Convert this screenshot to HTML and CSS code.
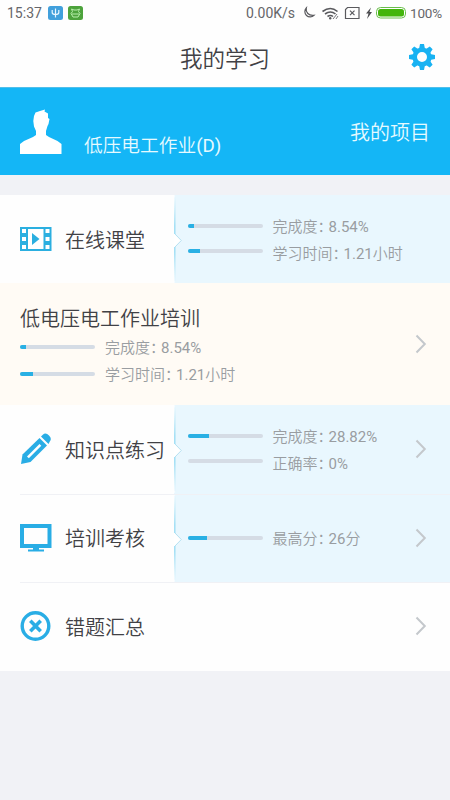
FILE: index.html
```html
<!DOCTYPE html>
<html lang="zh-CN">
<head>
<meta charset="utf-8">
<title>我的学习</title>
<link rel="stylesheet" href="styles.css">
</head>
<body>
<svg class="defs" width="0" height="0">
  <symbol id="chevron" viewBox="0 0 12 20"><path d="M1.500 1.500 9.800 10 1.500 18.500" fill="none" stroke="#c4c8cc" stroke-width="2"/></symbol>
  <symbol id="notch" viewBox="0 0 9 88">
    <linearGradient id="edge" x1="0" y1="0" x2="0" y2="88" gradientUnits="userSpaceOnUse"><stop offset="0" stop-color="#a5e0f5" stop-opacity="0"/><stop offset=".35" stop-color="#a5e0f5"/><stop offset=".65" stop-color="#a5e0f5"/><stop offset="1" stop-color="#a5e0f5" stop-opacity="0"/></linearGradient>
    <path d="M0 0H.5Q1.3 15 1.3 39L7.5 45.500 1.300 52Q1.300 74 .5 88H0Z" fill="#fff"/>
    <path d="M.8 2V39" fill="none" stroke="url(#edge)" stroke-width="1.600"/>
    <path d="M.8 52V86" fill="none" stroke="url(#edge)" stroke-width="1.600"/>
    <path d="M1 39 7.300 45.500 1 52" fill="none" stroke="#b5e1f1" stroke-width="1"/>
  </symbol>
</svg>

<header class="status">
  <span class="time">15:37</span>
  <svg class="app-badges" width="36" height="16" viewBox="0 0 36 16">
    <rect x="0" y="1" width="15" height="14" rx="2.500" fill="#41a0dc"/>
    <path d="M7.500 3.500v9M4.200 5v2.500q0 2 3.300 2t3.300-2V5" fill="none" stroke="#e8f6ff" stroke-width="1.200"/>
    <rect x="20" y="1" width="15" height="14" rx="2.500" fill="#4da33c"/>
    <path d="M24.500 6.500 23.500 4l2.500 1h3l2.500-1-1 2.500 1.500 2-2 3.500h-5l-2-3.500ZM24 9h7" fill="none" stroke="#b9efac" stroke-width="1"/>
  </svg>
  <span class="speed">0.00K/s</span>
  <svg class="signals" width="106" height="16" viewBox="0 0 106 16">
    <path d="M5.300 3A5.100 5.100 0 1 0 13 10.300Q9 10.800 6.800 8.500T5.300 3Z" fill="none" stroke="#5a5a5e" stroke-width="1.200"/>
    <path d="M21.500 6.500q8-6 15 0M24 9q5.500-4 10.500 0M26.500 11.500q3-2 5.500 0" fill="none" stroke="#5a5a5e" stroke-width="1.600"/>
    <circle cx="29.200" cy="13.200" r="1.200" fill="#5a5a5e"/>
    <path d="m32 14 4-5M35 14l2-3" stroke="#77777b"/>
    <path d="M46.500 2.500h11.500v11h-13.500V4.500Z" fill="none" stroke="#5a5a5e" stroke-width="1.200"/>
    <path d="m49 5.700 4.500 4.500M53.500 5.700 49 10.200" stroke="#5a5a5e" stroke-width="1.200"/>
    <path d="m70 2.500-5 6h2.500l-1.500 5.500 5-7h-2.500Z" fill="#4c4c50"/>
    <rect x="75.500" y="2.500" width="29" height="10.500" rx="4" fill="#fff" stroke="#6abe4d"/>
    <rect x="77" y="4" width="26" height="7.500" rx="2.500" fill="#43b50b"/>
  </svg>
  <span class="battery">100%</span>
</header>

<nav class="nav">
  <h1>我的学习</h1>
  <svg class="gear" width="26" height="26" viewBox="-13 -13 26 26" fill="#18b2f2">
    <path d="M-2-13H2L3-8H-3ZM-2 13H2L3 8H-3ZM-13-2V2L-8 3V-3ZM13-2V2L8 3V-3Z"/>
    <path transform="rotate(45)" d="M-2-13H2L3-8H-3ZM-2 13H2L3 8H-3ZM-13-2V2L-8 3V-3ZM13-2V2L8 3V-3Z"/>
    <circle r="7.300" fill="none" stroke="#18b2f2" stroke-width="4.600"/>
  </svg>
</nav>

<section class="profile">
  <svg class="avatar" width="42" height="45" viewBox="0 0 42 45"><path d="M14 7 15.500 3.500 20 2 25 .5 24.500 2.500 28 4.500 28 9 29.500 10 28.500 15 27.500 17 26 22 26 26 29 28 37.500 32 41.500 35V45H0V35L4 32 13 28 16 26V22L14 17.500 13.300 12Z" fill="#fff"/></svg>
  <span class="job">低压电工作业<span class="latin">(D)</span></span>
  <span class="project">我的项目</span>
</section>

<main class="list">
  <div class="row">
    <div class="label">
      <svg width="32" height="26" viewBox="0 0 32 26"><path d="M0 1h31.500v24H0Z" fill="#2bafe0"/><path d="M8 3h15.500v20H8Z" fill="#fff"/><path d="M2 3h4v4H2ZM2 11h4v4H2ZM2 19h4v4H2ZM25.500 3h4v4h-4ZM25.500 11h4v4h-4ZM25.500 19h4v4h-4Z" fill="#fff"/><path d="m12 7 7.500 6-7.500 6Z" fill="#2bafe0"/></svg>
      <span>在线课堂</span>
    </div>
    <div class="panel">
      <svg class="notch"><use href="#notch"/></svg>
      <div class="stats">
        <div class="stat"><i class="bar"><b style="width:8.54%"></b></i><span>完成度<em>：</em><span class="latin">8.54%</span></span></div>
        <div class="stat"><i class="bar"><b style="width:17%"></b></i><span>学习时间<em>：</em><span class="latin">1.21</span>小时</span></div>
      </div>
    </div>
  </div>

  <div class="course">
    <div class="course-body">
      <h2>低电压电工作业培训</h2>
      <div class="stats">
        <div class="stat"><i class="bar"><b style="width:8.54%"></b></i><span>完成度<em>：</em><span class="latin">8.54%</span></span></div>
        <div class="stat"><i class="bar"><b style="width:17%"></b></i><span>学习时间<em>：</em><span class="latin">1.21</span>小时</span></div>
      </div>
    </div>
    <svg class="chevron"><use href="#chevron"/></svg>
  </div>

  <div class="row">
    <div class="label">
      <svg width="32" height="32" viewBox="0 0 32 32"><path d="M1 31 2.500 21.500 19.500 5l7.500 7.500L10.500 29Z" fill="#29ade5"/><path d="m21 3.500 1.800-1.800q3-2.500 6.200.8t.8 6L28.500 11Z" fill="#29ade5"/><path d="m7 23.500 12.500-12.500 1.800 1.800L8.800 25.300Z" fill="#fff"/></svg>
      <span>知识点练习</span>
    </div>
    <div class="panel">
      <svg class="notch"><use href="#notch"/></svg>
      <div class="stats">
        <div class="stat"><i class="bar"><b style="width:28.82%"></b></i><span>完成度<em>：</em><span class="latin">28.82%</span></span></div>
        <div class="stat"><i class="bar"></i><span>正确率<em>：</em><span class="latin">0%</span></span></div>
      </div>
      <svg class="chevron"><use href="#chevron"/></svg>
    </div>
  </div>

  <div class="row">
    <div class="label">
      <svg width="32" height="30" viewBox="0 0 32 30"><path d="M0 1h31.500v24H0ZM4 5v16h23.500V5Z" fill="#29ade5" fill-rule="evenodd"/><path d="M13 24h6v2.500h5v2H8v-2h5Z" fill="#29ade5"/></svg>
      <span>培训考核</span>
    </div>
    <div class="panel">
      <svg class="notch"><use href="#notch"/></svg>
      <div class="stats">
        <div class="stat"><i class="bar"><b style="width:26%"></b></i><span>最高分<em>：</em><span class="latin">26</span>分</span></div>
      </div>
      <svg class="chevron"><use href="#chevron"/></svg>
    </div>
  </div>

  <div class="row">
    <div class="label">
      <svg width="32" height="32" viewBox="0 0 32 32" fill="none" stroke="#29ade5"><circle cx="15.500" cy="16" r="13.300" stroke-width="3.400"/><path d="m10.300 10.800 10.400 10.400M20.700 10.800 10.300 21.200" stroke-width="3.600"/></svg>
      <span>错题汇总</span>
    </div>
    <svg class="chevron"><use href="#chevron"/></svg>
  </div>
</main>
</body>
</html>
```

FILE: styles.css
```css
* { box-sizing: border-box; }

body {
  margin: 0;
  background: #f1f2f6;
  color: #414145;
  font-family: Roboto, "Noto Sans CJK SC", sans-serif;
  font-weight: 350;
}

svg { display: block; flex: none; }
.defs { position: absolute; }
h1, h2 { margin: 0; font-weight: 350; }
em, i { font-style: normal; }
.latin { font-weight: 400; }

.status {
  display: flex;
  align-items: center;
  height: 26px;
  padding: 0 7px;
  background: #fefefe;
  color: #66666a;
  font-size: 14px;
  font-weight: 400;
  white-space: nowrap;
}
.time { width: 41px; }
.speed { width: 51px; margin-left: auto; }
.signals { margin-left: 4px; }
.battery { width: 33px; margin-left: 3px; font-size: 13.500px; letter-spacing: -0.200px; }

.nav {
  display: grid;
  grid-template-columns: 1fr auto 1fr;
  align-items: center;
  height: 61px;
  padding: 0 15px;
  background: #fefefe;
}
.nav h1 { grid-column: 2; margin-top: 4px; font-size: 22.500px; line-height: 32px; }
.gear { justify-self: end; }

.profile {
  display: flex;
  align-items: center;
  height: 88px;
  padding: 0 20px;
  background: #14b6f6;
  border-top: 1px solid #51bfea;
  color: #e6faff;
}
.avatar { margin-bottom: 1px; }
.job { margin: 29px 0 0 22px; font-size: 18.700px; line-height: 28px; }
.project { margin-left: auto; font-size: 20px; }

.list { margin-top: 20px; background: #fefefe; }

.row {
  position: relative;
  display: flex;
  align-items: center;
  height: 88.500px;
}
.row:first-child { height: 88px; }
.row + .row::before {
  content: "";
  position: absolute;
  top: 0;
  left: 20px;
  right: 0;
  height: 1px;
  background: #f0f1f5;
}
.label {
  display: flex;
  align-items: center;
  gap: 13px;
  width: 174px;
  padding-left: 20px;
  font-size: 20px;
  white-space: nowrap;
}
.panel {
  display: flex;
  align-items: center;
  flex: 1;
  height: 100%;
  background: #e9f7fe;
}
.notch { width: 9px; height: 88px; }
.panel .stats { margin-left: 4.500px; }
.panel .stat + .stat .bar { margin-bottom: 3px; }

.stats { display: flex; flex-direction: column; gap: 3px; }
.stat {
  display: flex;
  align-items: center;
  gap: 10px;
  height: 24px;
  color: #999da1;
  font-size: 15px;
  white-space: nowrap;
}
.stat em { letter-spacing: -4px; }
.bar {
  width: 75px;
  height: 4px;
  border-radius: 2px;
  background: #d5dce5;
  overflow: hidden;
}
.bar b { display: block; height: 100%; background: #29b0e4; }

.chevron { width: 12px; height: 20px; margin-left: auto; margin-right: 23px; }

.course {
  display: flex;
  align-items: center;
  height: 122px;
  padding-left: 20px;
  background: #fffbf5;
}
.course h2 { margin-top: 1px; font-size: 20px; line-height: 30px; }
.course .stats { margin-top: 1px; }
```
